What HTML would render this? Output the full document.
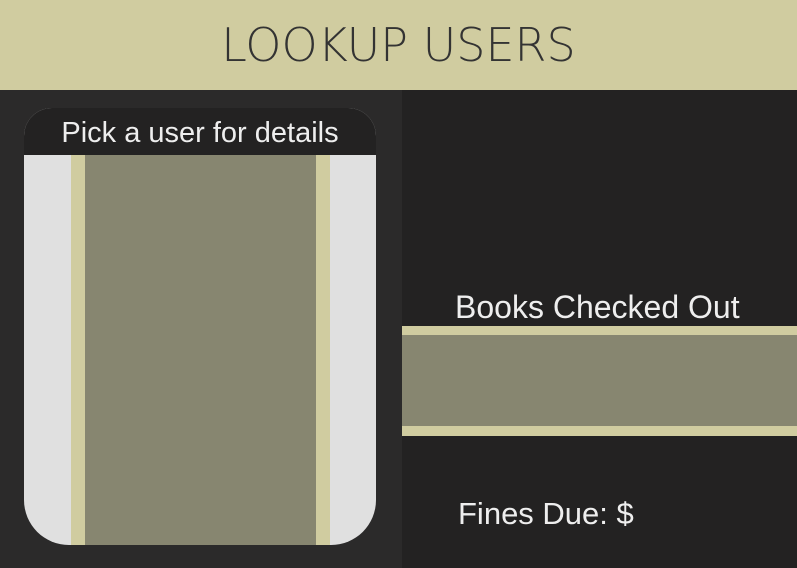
<!DOCTYPE html>
<html><head><style>
body{margin:0;width:797px;height:568px;overflow:hidden;background:#232222;font-family:"Liberation Sans",sans-serif;position:relative}
.hdr{position:absolute;left:0;top:0;width:797px;height:90px;background:#d0cca0;}
.hdr span{position:absolute;left:0;width:797px;text-align:center;top:18px;font-size:46px;color:#333;letter-spacing:0px;font-family:"DejaVu Sans","Liberation Sans",sans-serif;font-weight:200}
.left{position:absolute;left:0;top:90px;width:402px;height:478px;background:#2b2a2a}
.right{position:absolute;left:402px;top:90px;width:395px;height:478px;background:#232222}
.card{position:absolute;left:24px;top:108px;width:352px;height:437px;border-radius:28px 28px 45px 45px;overflow:hidden;background:#e0e0e0}
.ch{position:absolute;left:0;top:0;width:352px;height:47px;background:#232222;color:#eee;font-size:29px;text-align:center;line-height:50px}
.s1{position:absolute;left:47px;top:47px;width:259px;height:390px;background:#d0cca0}
.s2{position:absolute;left:61px;top:47px;width:231px;height:390px;background:#878670}
.t{position:absolute;color:#eee}
</style></head><body>
<div class="hdr"><span>LOOKUP USERS</span></div>
<div class="left"></div><div class="right"></div>
<div class="card"><div class="ch">Pick a user for details</div><div class="s1"></div><div class="s2"></div></div>
<div class="t" style="left:455px;top:289px;font-size:32px">Books Checked Out</div>
<div style="position:absolute;left:402px;top:326px;width:395px;height:110px;background:#d0cca0"></div>
<div style="position:absolute;left:402px;top:335px;width:395px;height:91px;background:#878670"></div>
<div class="t" style="left:458px;top:496px;font-size:31px">Fines Due: $</div>
</body></html>
